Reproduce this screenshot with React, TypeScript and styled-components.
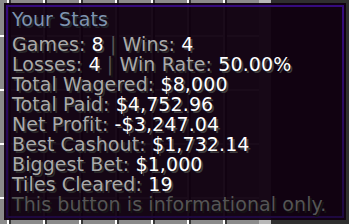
import React from "react";
import styled, { createGlobalStyle } from "styled-components";

const Global = createGlobalStyle`
  html, body { margin: 0; padding: 0; background: #2e2e2e; }
  body { width: 349px; height: 224px; overflow: hidden; }
`;

const Scene = styled.div`
  position: relative;
  width: 349px;
  height: 224px;
  overflow: hidden;
  background: #2f2f2f;
  display: flex;
`;

const Panel = styled.div`
  width: 259px;
  height: 100%;
  border-right: 12px solid #b8b8b8;
  background-color: #8b8b8b;
  background-image:
    repeating-linear-gradient(90deg, transparent 0 7px, #ffffff 7px 9px, #373737 9px 11px, transparent 11px 36px),
    repeating-linear-gradient(180deg, transparent 0 35px, #ffffff 35px 37px, transparent 37px 54px);
`;

const Tooltip = styled.div`
  position: absolute;
  left: 4px;
  top: 3px;
  width: 342px;
  height: 217px;
  box-sizing: border-box;
  padding: 2px;
  background: rgba(16, 0, 16, 0.955);
  display: flex;
`;

const Frame = styled.div`
  flex: 1;
  border: 2px solid transparent;
  border-image: linear-gradient(180deg, #350b7e, #1e0840) 1;
  padding: 2px 0 0 4px;
  display: flex;
  flex-direction: column;
  font-family: "DejaVu Sans", sans-serif;
  font-size: 19px;
  line-height: 20px;
  letter-spacing: 0.1px;
  white-space: nowrap;
`;

const Line = styled.div<{ $gap?: number }>`
  height: 20px;
  margin-bottom: ${(p) => p.$gap ?? 0}px;
`;

const tone = {
  title: ["#7f94b0", "#1f252c"],
  label: ["#aaaaaa", "#2a2a2a"],
  value: ["#ffffff", "#3f3f3f"],
  dim: ["#555555", "#151515"],
} as const;

const T = styled.span<{ $tone: keyof typeof tone }>`
  color: ${(p) => tone[p.$tone][0]};
  text-shadow: 2px 2px 0 ${(p) => tone[p.$tone][1]};
`;

const Sep = () => <T $tone="dim"> | </T>;

const Stat = ({ label, value }: { label: string; value: string }) => (
  <Line>
    <T $tone="label">{label}: </T>
    <T $tone="value">{value}</T>
  </Line>
);

export default function App() {
  return (
    <>
      <Global />
      <Scene>
        <Panel />
        <Tooltip>
          <Frame>
            <Line $gap={5}>
              <T $tone="title">Your Stats</T>
            </Line>
            <Line>
              <T $tone="label">Games: </T>
              <T $tone="value">8</T>
              <Sep />
              <T $tone="label">Wins: </T>
              <T $tone="value">4</T>
            </Line>
            <Line>
              <T $tone="label">Losses: </T>
              <T $tone="value">4</T>
              <Sep />
              <T $tone="label">Win Rate: </T>
              <T $tone="value">50.00%</T>
            </Line>
            <Stat label="Total Wagered" value="$8,000" />
            <Stat label="Total Paid" value="$4,752.96" />
            <Stat label="Net Profit" value="-$3,247.04" />
            <Stat label="Best Cashout" value="$1,732.14" />
            <Stat label="Biggest Bet" value="$1,000" />
            <Stat label="Tiles Cleared" value="19" />
            <Line>
              <T $tone="dim">This button is informational only.</T>
            </Line>
          </Frame>
        </Tooltip>
      </Scene>
    </>
  );
}
